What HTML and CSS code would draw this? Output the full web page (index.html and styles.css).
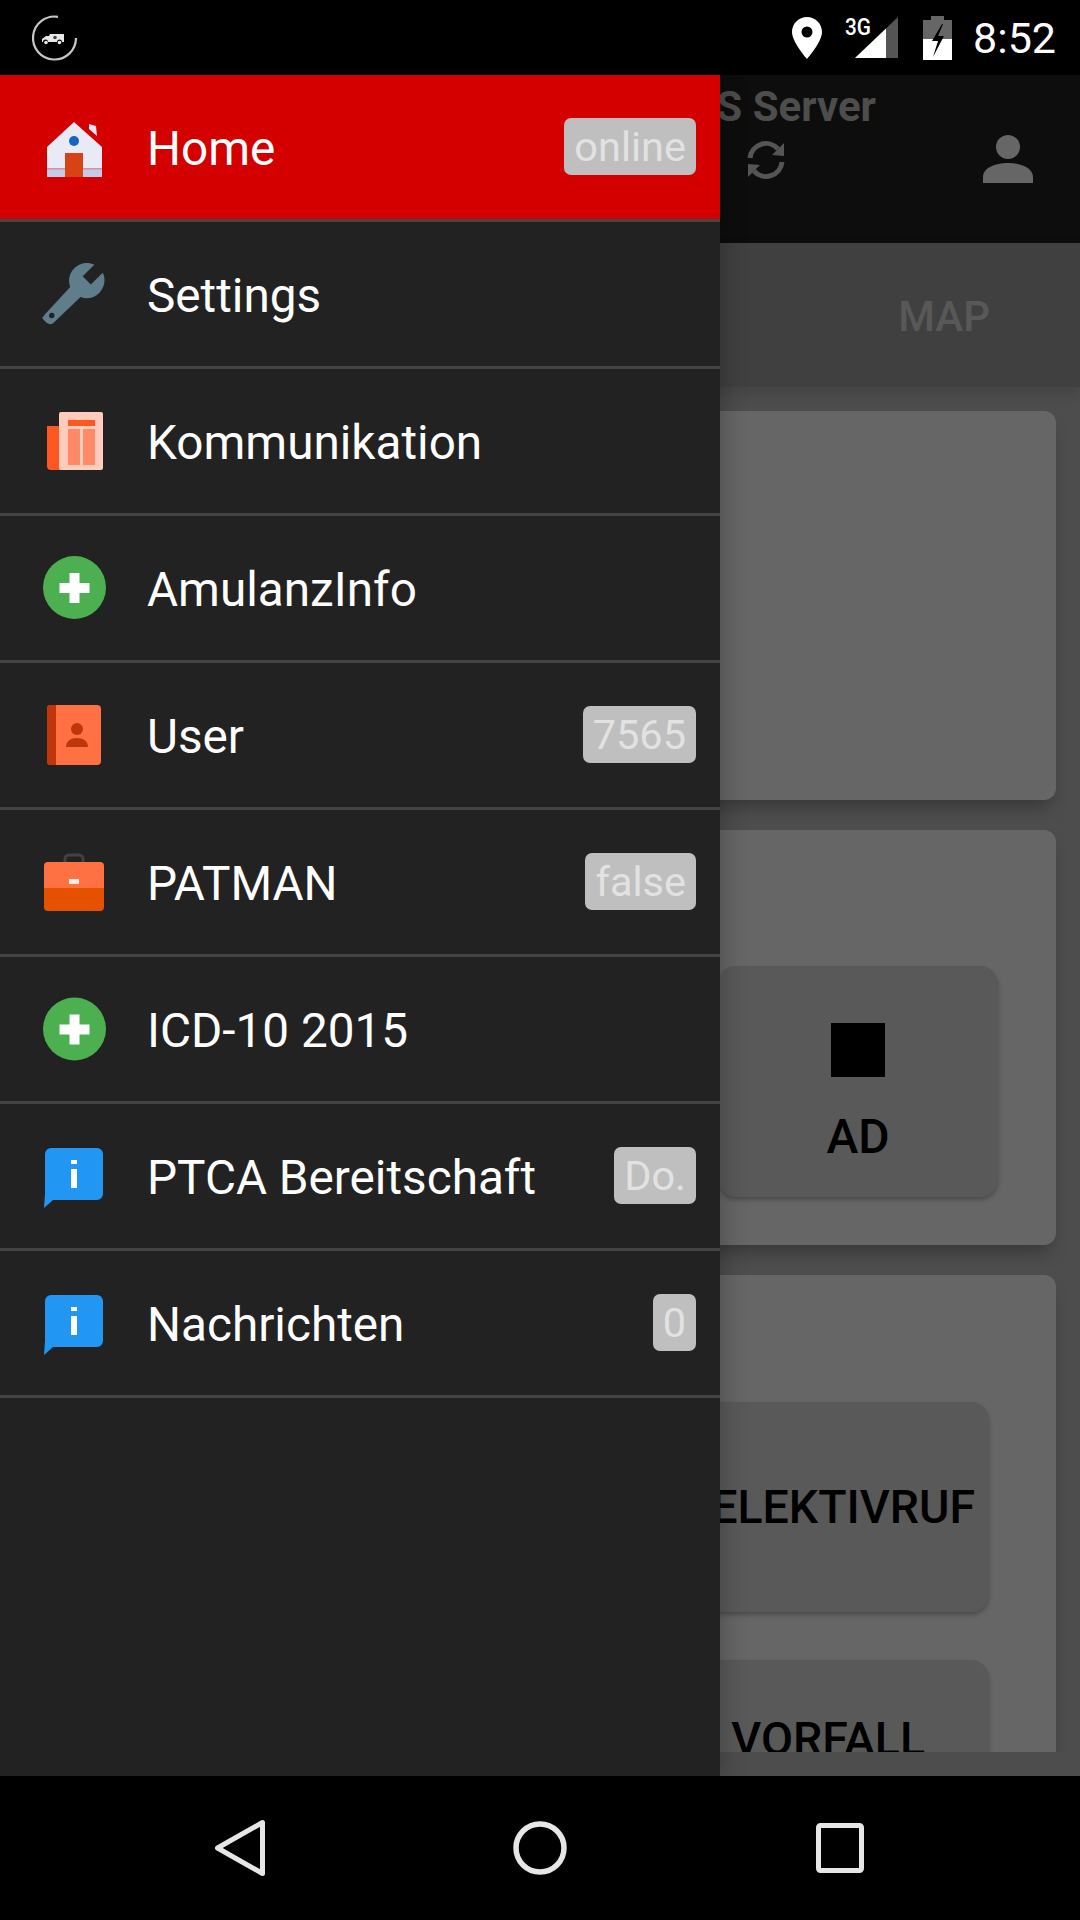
FILE: index.html
```html
<!DOCTYPE html>
<html lang="de">
<head>
<meta charset="utf-8">
<title>Home</title>
<link rel="stylesheet" href="styles.css">
</head>
<body>
<div class="screen">
  <header class="status">
    <svg class="st-app" width="48" height="48" viewBox="0 0 48 48">
      <path d="M28 2.8A21.5 21.5 0 1 0 46 24" fill="none" stroke="#c8c8c8" stroke-width="2.2"/>
      <path d="M12 28v-3l4-3h3l1-2h14v8h-2a2.500 2.500 0 0 0-5 0h-9a2.500 2.500 0 0 0-5 0z" fill="#e8e8e8"/>
      <circle cx="16" cy="28.500" r="1.800" fill="#e8e8e8"/><circle cx="29.500" cy="28.500" r="1.800" fill="#e8e8e8"/>
      <circle cx="25" cy="23.500" r="1.800" fill="#444"/>
    </svg>
    <div class="st-right">
      <svg class="st-pin" width="30" height="42" viewBox="0 0 30 42">
        <path fill-rule="evenodd" d="M15 0C6.700 0 0 6.700 0 15c0 10 15 27 15 27s15-17 15-27C30 6.700 23.300 0 15 0zm0 20.500a5.500 5.500 0 1 1 0-11 5.500 5.500 0 0 1 0 11z" fill="#fff"/>
      </svg>
      <svg class="st-signal" width="53" height="42" viewBox="0 0 53 42">
        <text class="st-3g" x="0" y="18" textLength="26" lengthAdjust="spacingAndGlyphs">3G</text>
        <path d="M10 41L53 0v41z" fill="#555"/>
        <path d="M10 41L41 11.500V41z" fill="#fff"/>
      </svg>
      <svg class="st-batt" width="29" height="44" viewBox="0 0 29 44">
        <path d="M8 0h13v4h8v19H0V4h8z" fill="#666"/>
        <path d="M0 23h29v21H0z" fill="#fff"/>
        <path d="M19 8L9 25h6l-5 16 11-21h-6l5-12z" fill="#000"/>
      </svg>
      <span class="st-time">8:52</span>
    </div>
  </header>

  <div class="app">
    <div class="appbar">
      <div class="appbar-title">S Server</div>
      <div class="appbar-icons">
        <svg width="40" height="40" viewBox="0 0 40 40" fill="none">
          <path d="M4 18A16 16 0 0 1 32 9" stroke="#555" stroke-width="5"/>
          <path d="M26 15l12 1V3z" fill="#555"/>
          <path d="M36 22A16 16 0 0 1 8 31" stroke="#555" stroke-width="5"/>
          <path d="M14 25L2 24v13z" fill="#555"/>
        </svg>
        <svg width="50" height="48" viewBox="0 0 50 48">
          <circle cx="25" cy="12" r="12" fill="#666"/>
          <path d="M0 48v-6c0-9 12-14 25-14s25 5 25 14v6z" fill="#666"/>
        </svg>
      </div>
    </div>
    <nav class="tabs"><span class="tab">MAP</span></nav>
    <main class="content">
      <section class="card card-a"></section>
      <section class="card card-b">
        <div class="btn btn-ad">
          <span class="square"></span>
          <span class="btn-label">AD</span>
        </div>
      </section>
      <section class="card card-c">
        <div class="btn btn-wide btn-sel"><span class="btn-label">SELEKTIVRUF</span></div>
        <div class="btn btn-wide btn-vor"><span class="btn-label">VORFALL</span></div>
      </section>
    </main>
  </div>

  <aside class="drawer">
    <div class="row row-active">
      <svg class="ico" width="64" height="64" viewBox="0 0 64 64">
        <path d="M47 9l7 2 1 10-8-7z" fill="#dfe3f3"/>
        <path d="M32 7L60 32v30H5V32z" fill="#e8eaf6"/>
        <path d="M5 53h55v9H5z" fill="#c5cae9"/>
        <path d="M5 53h55v1.500H5z" fill="#d9909c"/>
        <circle cx="32" cy="26" r="5" fill="#1565c0"/>
        <path d="M23 38h18v24H23z" fill="#d84315"/>
      </svg>
      <span class="label">Home</span>
      <span class="badge">online</span>
    </div>
    <div class="row">
      <svg class="ico" width="64" height="64" viewBox="0 1.200 23.600 23">
        <g transform="translate(24 0) scale(-1 1)">
          <path d="M23.400 20.700L13.600 10.100c.9-2.300.4-5-1.500-6.900-2-2-5-2.400-7.400-1.300L9 6.200 6 9.200 1.600 4.900C.4 7.300.9 10.300 2.900 12.300c1.900 1.900 4.600 2.400 6.900 1.500l10 9.600c.5.500 1.500.6 2.400 0l1.300-1.300c.6-.6.500-1.100-.6-1.400z" fill="#607d8b"/>
          <circle cx="20.400" cy="20.600" r="1" fill="#222"/>
        </g>
      </svg>
      <span class="label">Settings</span>
    </div>
    <div class="row">
      <svg class="ico" width="64" height="64" viewBox="0 0 64 64">
        <path d="M5 17h14v44H9a4 4 0 0 1-4-4z" fill="#ff5722"/>
        <rect x="17" y="3" width="44" height="58" rx="2" fill="#ffccbc"/>
        <path d="M26 11h27v6H26z" fill="#ff5722"/>
        <path d="M26 20h12v36H26zM41 20h12v36H41z" fill="#ff8a65"/>
      </svg>
      <span class="label">Kommunikation</span>
    </div>
    <div class="row">
      <svg class="ico" width="64" height="64" viewBox="0 0 64 64">
        <circle cx="32.500" cy="31.500" r="31.500" fill="#4caf50"/>
        <path d="M27.500 17h10v10h10v10h-10v10h-10V37h-10V27h10z" fill="#fff"/>
      </svg>
      <span class="label">AmulanzInfo</span>
    </div>
    <div class="row">
      <svg class="ico" width="64" height="64" viewBox="0 0 64 64">
        <rect x="5" y="2" width="54" height="60" rx="4" fill="#ff7043"/>
        <path d="M9 2h5v60H9a4 4 0 0 1-4-4V6a4 4 0 0 1 4-4z" fill="#bf360c"/>
        <circle cx="35" cy="26" r="6" fill="#bf360c"/>
        <path d="M24 44c0-6 5-9 11-9s11 3 11 9z" fill="#bf360c"/>
      </svg>
      <span class="label">User</span>
      <span class="badge">7565</span>
    </div>
    <div class="row">
      <svg class="ico" width="64" height="64" viewBox="0 0 64 64">
        <path d="M23 12V9a4 4 0 0 1 4-4h10a4 4 0 0 1 4 4v3" fill="none" stroke="#424242" stroke-width="3"/>
        <path d="M2 38V16a4 4 0 0 1 4-4h52a4 4 0 0 1 4 4v22z" fill="#ff7043"/>
        <path d="M2 38h60v19a4 4 0 0 1-4 4H6a4 4 0 0 1-4-4z" fill="#e65100"/>
        <rect x="27" y="29" width="10" height="5" fill="#fff3e0"/>
      </svg>
      <span class="label">PATMAN</span>
      <span class="badge">false</span>
    </div>
    <div class="row">
      <svg class="ico" width="64" height="64" viewBox="0 0 64 64">
        <circle cx="32.500" cy="32" r="31.500" fill="#4caf50"/>
        <path d="M27.500 17.500h10v10h10v10h-10v10h-10v-10h-10v-10h10z" fill="#fff"/>
      </svg>
      <span class="label">ICD-10 2015</span>
    </div>
    <div class="row">
      <svg class="ico" width="64" height="64" viewBox="0 0 64 64">
        <path d="M9 4h46a6 6 0 0 1 6 6v40a6 6 0 0 1-6 6H11l-9 8 1-14V10a6 6 0 0 1 6-6z" fill="#2196f3"/>
        <path d="M29 16h6v4h-6zM29 25h6v19h-6z" fill="#fff"/>
      </svg>
      <span class="label">PTCA Bereitschaft</span>
      <span class="badge">Do.</span>
    </div>
    <div class="row">
      <svg class="ico" width="64" height="64" viewBox="0 0 64 64">
        <path d="M9 4h46a6 6 0 0 1 6 6v40a6 6 0 0 1-6 6H11l-9 8 1-14V10a6 6 0 0 1 6-6z" fill="#2196f3"/>
        <path d="M29 16h6v4h-6zM29 25h6v19h-6z" fill="#fff"/>
      </svg>
      <span class="label">Nachrichten</span>
      <span class="badge">0</span>
    </div>
  </aside>

  <footer class="navbar">
    <svg width="52" height="58" viewBox="0 0 52 58">
      <path d="M48.500 3.500V54.500L3.500 29z" fill="none" stroke="#e6e6e6" stroke-width="5" stroke-linejoin="round"/>
    </svg>
    <svg class="nav-home" width="54" height="54" viewBox="0 0 54 54">
      <circle cx="27" cy="27" r="24" fill="none" stroke="#e6e6e6" stroke-width="5.500"/>
    </svg>
    <svg width="48" height="50" viewBox="0 0 48 50">
      <rect x="2.500" y="2.500" width="43" height="45" rx="2" fill="none" stroke="#e6e6e6" stroke-width="5"/>
    </svg>
  </footer>
</div>
</body>
</html>
```

FILE: styles.css
```css
* { box-sizing: border-box; }
html, body { margin: 0; padding: 0; background: #000; }
.screen {
  position: relative;
  width: 1080px;
  height: 1920px;
  overflow: hidden;
  display: flex;
  flex-direction: column;
  font-family: Roboto, "Liberation Sans", sans-serif;
}

/* status bar */
.status {
  height: 75px;
  flex: none;
  background: #000;
  display: flex;
  align-items: center;
  justify-content: space-between;
  padding: 0 24px 0 30px;
}
.st-right { display: flex; align-items: center; }
.st-signal { margin-left: 23px; margin-top: 1px; }
.st-3g { font: 500 24px Roboto, sans-serif; fill: #fff; }
.st-batt { margin-left: 25px; margin-top: 1px; }
.st-time { margin-left: 21px; font-size: 43px; color: #fff; line-height: 48px; margin-top: 1px; }

/* dimmed app behind the drawer */
.app {
  flex: 1;
  min-height: 0;
  display: flex;
  flex-direction: column;
  background: #4d4d4d;
}
.appbar {
  height: 168px;
  flex: none;
  background: #0d0d0d;
  padding: 0 204px 0 0;
  position: relative;
}
.appbar-title {
  text-align: right;
  font-size: 42px;
  font-weight: 700;
  color: #4d4d4d;
  line-height: 48px;
  padding-top: 8px;
}
.appbar-icons {
  display: flex;
  justify-content: flex-end;
  align-items: flex-start;
  gap: 197px;
  margin-right: -157px;
  padding-top: 4px;
}
.appbar-icons svg:first-child { margin-top: 5px; }
.tabs {
  height: 144px;
  flex: none;
  background: #404040;
  display: flex;
  align-items: center;
  justify-content: flex-end;
  padding: 2px 90px 0 0;
  box-shadow: 0 6px 14px rgba(0, 0, 0, .14);
  position: relative;
}
.tab { font-size: 42px; font-weight: 500; color: #585858; }
.content {
  height: 1365px;
  flex: none;
  overflow: hidden;
  padding: 24px 24px 0;
  display: flex;
  flex-direction: column;
  gap: 30px;
}
.card {
  flex: none;
  background: #666;
  border-radius: 12px;
  box-shadow: 0 12px 18px -6px rgba(0, 0, 0, .3);
}
.card-a { height: 389px; }
.card-b {
  height: 415px;
  padding: 136px 58px 0 0;
  display: flex;
  justify-content: flex-end;
}
.card-c {
  height: 520px;
  padding: 127px 67px 0 0;
  display: flex;
  flex-direction: column;
  align-items: flex-end;
  gap: 48px;
}
.btn {
  flex: none;
  background: #595959;
  border-radius: 18px;
  box-shadow: 0 3px 4px rgba(0, 0, 0, .25);
  color: #000;
  display: flex;
  flex-direction: column;
  align-items: center;
}
.btn-label { font-size: 46.5px; font-weight: 500; line-height: 54px; }
.btn-ad { width: 280px; height: 231px; padding-top: 57px; }
.square { width: 54px; height: 54px; background: #000; }
.btn-ad .btn-label { margin-top: 33px; font-size: 48px; }
.btn-wide { width: 400px; height: 210px; align-items: flex-end; }
.btn-sel { justify-content: center; padding-right: 14px; }
.btn-vor { padding-right: 64px; padding-top: 52px; }

/* drawer */
.drawer {
  position: absolute;
  left: 0;
  top: 75px;
  bottom: 144px;
  width: 720px;
  background: #222;
  box-shadow: 4px 0 22px rgba(0, 0, 0, .22);
  color: #fff;
}
.row {
  height: 147px;
  display: flex;
  align-items: center;
  padding: 0 24px 0 42px;
  border-bottom: 3px solid #444;
}
.row-active { background: #d40000; }
.ico { flex: none; }
.label { margin-left: 41px; padding-top: 3px; font-size: 47.7px; line-height: 54px; flex: 1; }
.badge {
  flex: none;
  height: 57px;
  margin-top: -2px;
  padding: 0 10px;
  background: #bfbfbf;
  color: #e2e2e2;
  border-radius: 7px;
  font-size: 41.5px;
  line-height: 57px;
}

/* nav bar */
.navbar {
  height: 144px;
  flex: none;
  background: #000;
  position: relative;
  z-index: 2;
  display: flex;
  align-items: center;
  justify-content: space-between;
  padding: 0 216px 0 214px;
}
.nav-home { margin-left: -2px; }
```
